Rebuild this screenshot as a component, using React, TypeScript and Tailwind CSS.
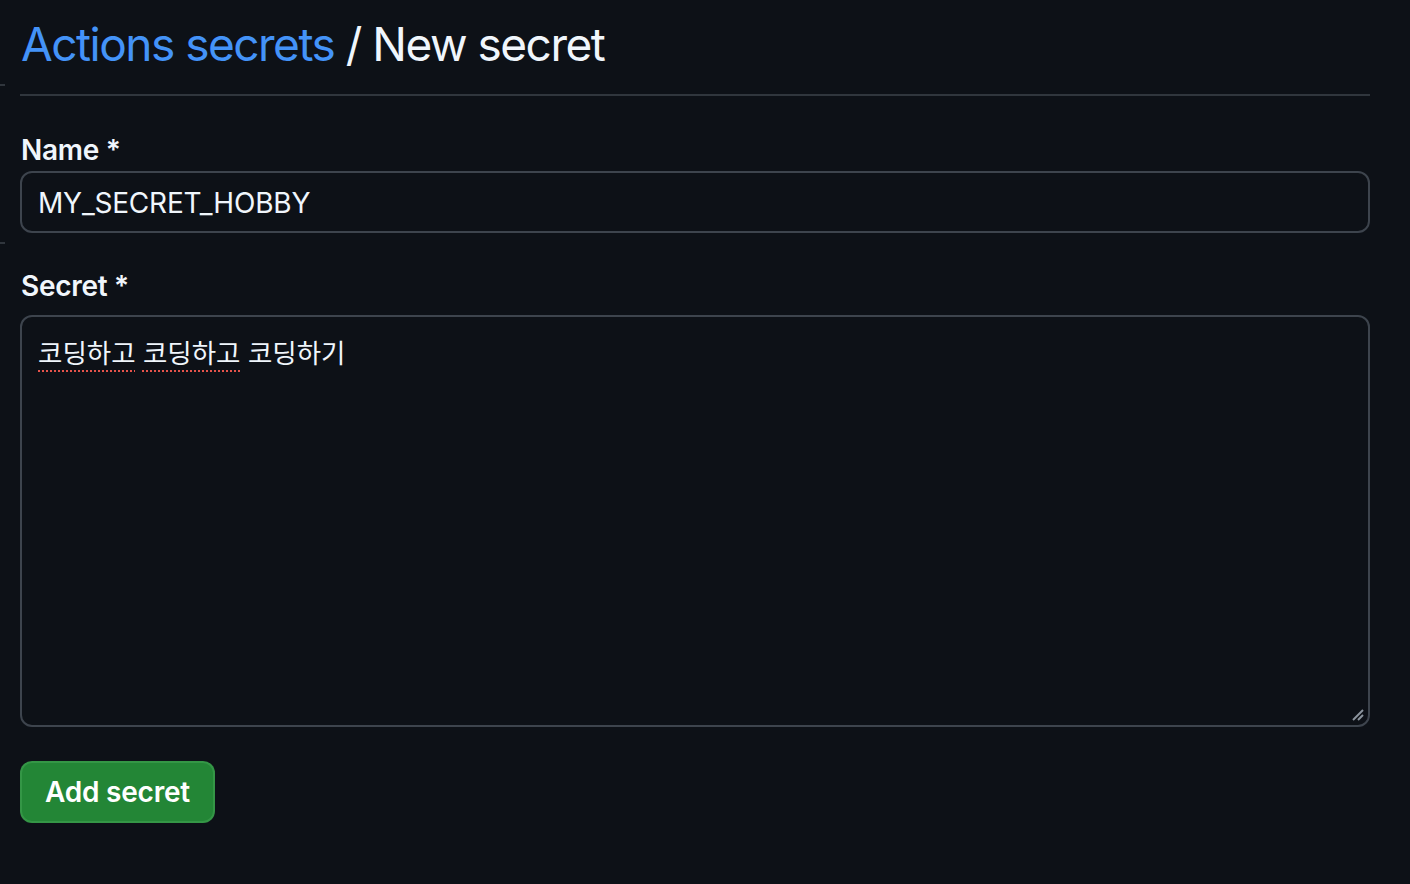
import React from "react";

const font = { fontFamily: "Inter, 'Noto Sans CJK KR', system-ui, sans-serif" };

function ResizeGrip() {
  return (
    <svg width="14" height="14" viewBox="0 0 14 14" className="absolute bottom-[4px] right-[4px]">
      <line x1="3" y1="13" x2="13" y2="3" stroke="#8b949e" strokeWidth="2" />
      <line x1="8" y1="13" x2="13" y2="8" stroke="#8b949e" strokeWidth="2" />
    </svg>
  );
}

export default function App() {
  return (
    <div style={font} className="relative min-h-[884px] w-[1410px] bg-[#0d1117] text-[#f0f6fc]">
      {/* little ticks on the left edge */}
      <span className="absolute left-0 top-[84px] h-[2px] w-[5px] bg-[#30363d]" />
      <span className="absolute left-0 top-[242px] h-[2px] w-[5px] bg-[#30363d]" />

      <div className="w-[1370px] pl-5">
        {/* Header */}
        <h1 className="pt-[14px] pb-[20px] pl-px text-[46px] leading-[60px] tracking-[-1.5px] border-b-2 border-[#30363d]">
          <span className="text-[#4493f8]">Actions secrets</span>
          <span> / New secret</span>
        </h1>

        {/* Name */}
        <label className="mt-[36px] block pl-px text-[28px] font-semibold leading-[36px] tracking-[-0.3px]">Name *</label>
        <div className="mt-[3px] flex h-[62px] items-center rounded-[12px] border-2 border-[#3d444d] px-[16px] pt-[2px] text-[28px] tracking-[-0.2px]">
          MY_SECRET_HOBBY
        </div>

        {/* Secret */}
        <label className="mt-[35px] block pl-px text-[28px] font-semibold leading-[36px] tracking-[-0.3px]">Secret *</label>
        <div className="relative mt-[11px] h-[412px] rounded-[12px] border-2 border-[#3d444d] px-[16px] pt-[19px] text-[26.5px] leading-[34px]">
          <span className="underline decoration-dotted decoration-[#e5534b] decoration-2 underline-offset-[7px]">코딩하고</span>{" "}
          <span className="underline decoration-dotted decoration-[#e5534b] decoration-2 underline-offset-[7px]">코딩하고</span>{" "}
          코딩하기
          <ResizeGrip />
        </div>

        {/* Button */}
        <button className="mt-[34px] flex h-[62px] w-[195px] items-center justify-center rounded-[12px] border-2 border-[#3fa152]/60 bg-[#238636] text-[28px] font-semibold tracking-[-0.2px] text-white">
          Add secret
        </button>
      </div>
    </div>
  );
}
